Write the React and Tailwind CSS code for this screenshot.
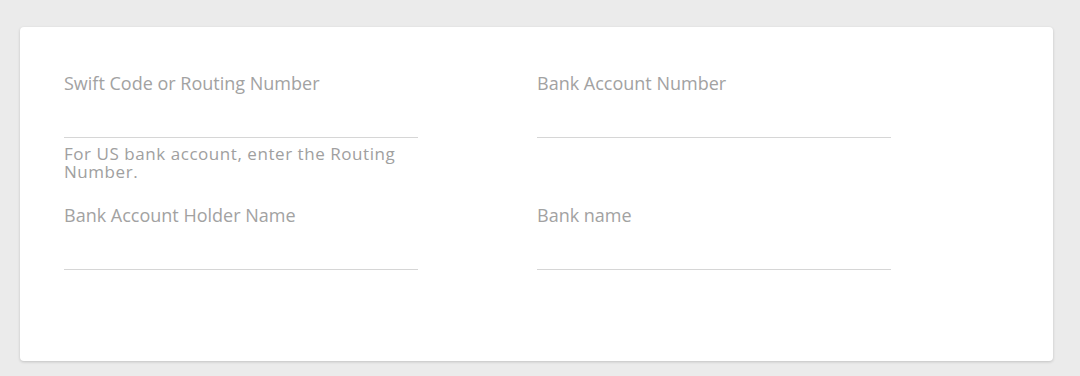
const Field = ({ label, hint }) => (
    <div className="flex flex-col">
        <label className="text-[18px] leading-[20px] text-[#a2a2a2]">{label}</label>
        <input
            type="text"
            className="h-[45px] w-full border-b border-[#d6d6d6] bg-transparent outline-none"
        />
        {hint && (
            <p className="mt-[7px] text-[17px] leading-[18px] tracking-[0.55px] text-[#a0a0a0]">{hint}</p>
        )}
    </div>
);

const App = () => {
    return (
        <div
            className="min-h-[376px] bg-[#ebebeb] pt-[27px] pl-[20px] pr-[27px]"
            style={{ fontFamily: '"Open Sans", "Liberation Sans", sans-serif' }}
        >
            <div className="h-[334px] rounded-[4px] bg-white pt-[46px] pl-[44px] shadow-[0_1px_3px_rgba(0,0,0,0.18)]">
                <div className="grid grid-cols-[354px_354px] gap-x-[119px] gap-y-[24px]">
                    <Field
                        label="Swift Code or Routing Number"
                        hint="For US bank account, enter the Routing Number."
                    />
                    <Field label="Bank Account Number" />
                    <Field label="Bank Account Holder Name" />
                    <Field label="Bank name" />
                </div>
            </div>
        </div>
    );
};

export default App;
